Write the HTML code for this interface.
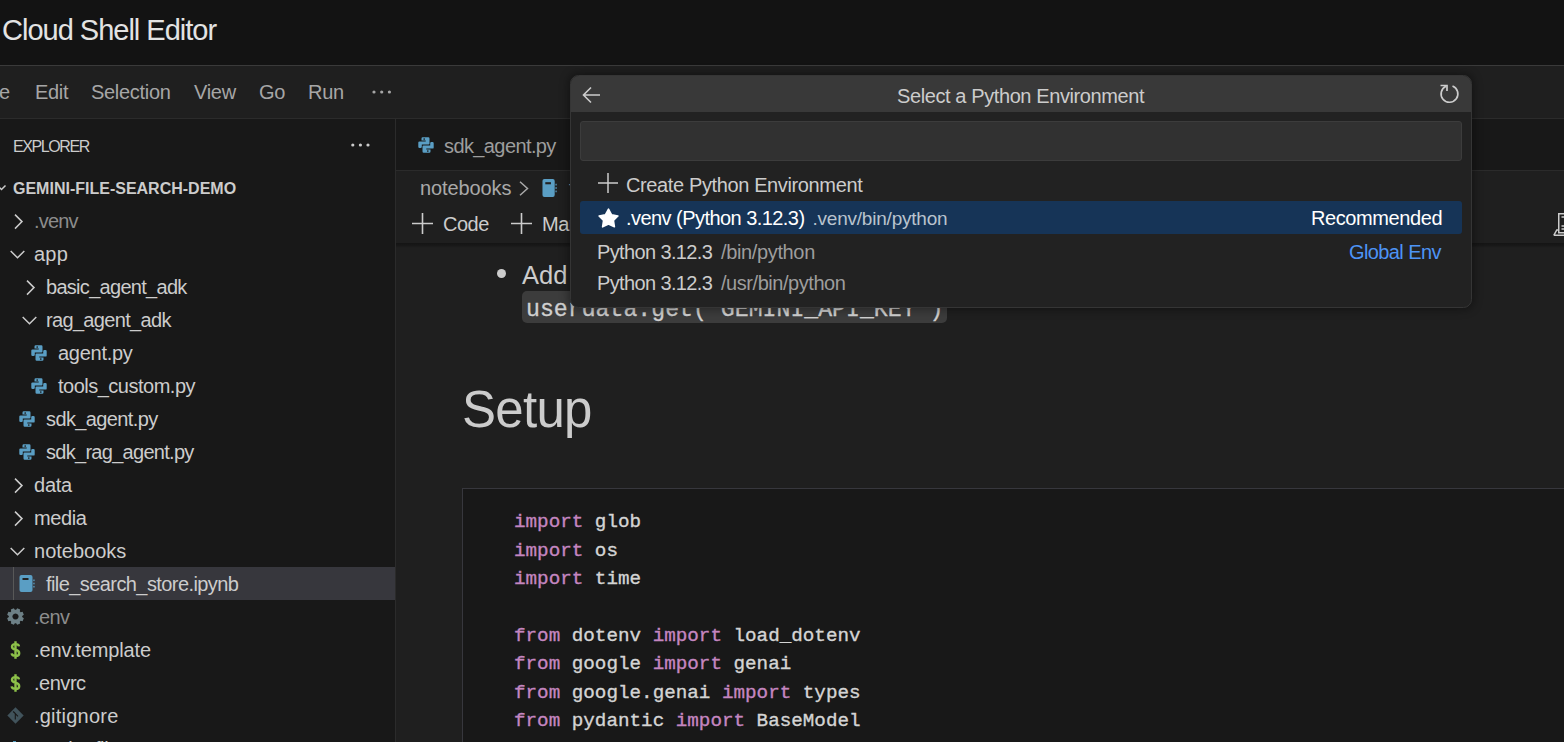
<!DOCTYPE html>
<html><head><meta charset="utf-8">
<style>
*{margin:0;padding:0;box-sizing:border-box}
html,body{width:1564px;height:742px;overflow:hidden;background:#1f1f1f;font-family:"Liberation Sans",sans-serif;color:#cccccc}
.a{position:absolute;white-space:nowrap;line-height:1}
svg.a{overflow:visible}
.ui{font-size:20px;letter-spacing:-0.5px}
.mi{font-size:20px;letter-spacing:-0.3px;color:#a6a6a6;top:82px}
.tr{font-size:20px;letter-spacing:-0.6px;color:#cccccc}
.dim{color:#8c8c8c}
.code{font-family:"Liberation Mono",monospace;font-size:19.25px;color:#d4d4d4;letter-spacing:0;-webkit-text-stroke:0.35px currentColor}
.kw{color:#c586c0}
.desc{color:#9d9d9d}
</style></head><body>
<!-- title bar -->
<div class="a" style="left:0;top:0;width:1564px;height:65px;background:#131313"></div>
<div class="a" style="left:2px;top:16px;font-size:29px;letter-spacing:-1px;color:#e3e3e3">Cloud Shell Editor</div>
<div class="a" style="left:0;top:65px;width:1564px;height:1px;background:#3a3a3a"></div>
<!-- menu bar -->
<div class="a" style="left:0;top:66px;width:1564px;height:52px;background:#1f1f1f"></div>
<div class="a" style="left:0;top:118px;width:1564px;height:1px;background:#2b2b2b"></div>
<div class="a mi" style="left:-1px">e</div>
<div class="a mi" style="left:35px">Edit</div>
<div class="a mi" style="left:91px">Selection</div>
<div class="a mi" style="left:194px">View</div>
<div class="a mi" style="left:259px">Go</div>
<div class="a mi" style="left:308px">Run</div>
<svg class="a" style="left:372px;top:89px" width="20" height="6"><circle cx="2" cy="3" r="1.6" fill="#a6a6a6"/><circle cx="9.7" cy="3" r="1.6" fill="#a6a6a6"/><circle cx="17.4" cy="3" r="1.6" fill="#a6a6a6"/></svg>

<!-- sidebar -->
<div class="a" style="left:0;top:119px;width:395px;height:623px;background:#181818"></div>
<div class="a" style="left:395px;top:119px;width:1px;height:623px;background:#2b2b2b"></div>
<div class="a" style="left:13px;top:139.2px;font-size:16px;letter-spacing:-1.4px;color:#cccccc">EXPLORER</div>
<svg class="a" style="left:351px;top:142px" width="20" height="6"><circle cx="1.8" cy="3" r="1.6" fill="#cccccc"/><circle cx="9.4" cy="3" r="1.6" fill="#cccccc"/><circle cx="17" cy="3" r="1.6" fill="#cccccc"/></svg>
<svg class="a" style="left:-3px;top:183px" width="10" height="10"><path d="M0.5 2.5 L4.5 6.5 L8.5 2.5" stroke="#cccccc" stroke-width="1.5" fill="none"/></svg>
<div class="a" style="left:13px;top:181px;font-size:16px;font-weight:bold;color:#cccccc">GEMINI-FILE-SEARCH-DEMO</div>

<!-- selected row -->
<div class="a" style="left:0;top:567px;width:395px;height:33px;background:#37373d"></div>
<div class="a" style="left:13px;top:567px;width:1px;height:33px;background:#585858"></div>

<!-- tree rows: rowtop = 204 + 33k ; text top = rowtop+7.4 -->
<!-- chevrons -->
<svg class="a" style="left:14px;top:213.6px" width="10" height="15"><path d="M1 0.6 L8 7.6 L1 14.6" stroke="#cccccc" stroke-width="1.5" fill="none"/></svg>
<div class="a tr dim" style="left:34px;top:211.4px;letter-spacing:-0.8px">.venv</div>
<svg class="a" style="left:10px;top:250px" width="15" height="10"><path d="M0.7 1 L7.5 7.8 L14.3 1" stroke="#cccccc" stroke-width="1.5" fill="none"/></svg>
<div class="a tr" style="left:34px;top:244.4px;letter-spacing:0.25px">app</div>
<svg class="a" style="left:26px;top:279.6px" width="10" height="15"><path d="M1 0.6 L8 7.6 L1 14.6" stroke="#cccccc" stroke-width="1.5" fill="none"/></svg>
<div class="a tr" style="left:46px;top:277.4px;letter-spacing:-0.71px">basic_agent_adk</div>
<svg class="a" style="left:22px;top:316px" width="15" height="10"><path d="M0.7 1 L7.5 7.8 L14.3 1" stroke="#cccccc" stroke-width="1.5" fill="none"/></svg>
<div class="a tr" style="left:46px;top:310.4px;letter-spacing:-0.67px">rag_agent_adk</div>

<svg class="a" style="left:31px;top:344.5px" width="16" height="16" viewBox="0 0 16 16"><use href="#py"/></svg>
<div class="a tr" style="left:58px;top:343.4px;letter-spacing:-0.27px">agent.py</div>
<svg class="a" style="left:31px;top:377.5px" width="16" height="16" viewBox="0 0 16 16"><use href="#py"/></svg>
<div class="a tr" style="left:58px;top:376.4px;letter-spacing:-0.5px">tools_custom.py</div>
<svg class="a" style="left:19px;top:410.5px" width="16" height="16" viewBox="0 0 16 16"><use href="#py"/></svg>
<div class="a tr" style="left:46px;top:409.4px;letter-spacing:-0.61px">sdk_agent.py</div>
<svg class="a" style="left:19px;top:443.5px" width="16" height="16" viewBox="0 0 16 16"><use href="#py"/></svg>
<div class="a tr" style="left:46px;top:442.4px;letter-spacing:-0.71px">sdk_rag_agent.py</div>

<svg class="a" style="left:14px;top:477.6px" width="10" height="15"><path d="M1 0.6 L8 7.6 L1 14.6" stroke="#cccccc" stroke-width="1.5" fill="none"/></svg>
<div class="a tr" style="left:34px;top:475.4px;letter-spacing:-0.23px">data</div>
<svg class="a" style="left:14px;top:510.6px" width="10" height="15"><path d="M1 0.6 L8 7.6 L1 14.6" stroke="#cccccc" stroke-width="1.5" fill="none"/></svg>
<div class="a tr" style="left:34px;top:508.4px;letter-spacing:-0.38px">media</div>
<svg class="a" style="left:10px;top:547px" width="15" height="10"><path d="M0.7 1 L7.5 7.8 L14.3 1" stroke="#cccccc" stroke-width="1.5" fill="none"/></svg>
<div class="a tr" style="left:34px;top:541.4px;letter-spacing:0.01px">notebooks</div>

<svg class="a" style="left:19px;top:575px" width="17" height="17" viewBox="0 0 17 17"><use href="#nb"/></svg>
<div class="a tr" style="left:46px;top:574.4px;letter-spacing:-0.58px">file_search_store.ipynb</div>

<svg class="a" style="left:7px;top:608px" width="17" height="17" viewBox="0 0 17 17"><path fill="#6d8086" fill-rule="evenodd" d="M16.83 10.21 L15.60 13.18 L13.66 12.78 L12.78 13.66 L13.18 15.60 L10.21 16.83 L9.12 15.17 L7.88 15.17 L6.79 16.83 L3.82 15.60 L4.22 13.66 L3.34 12.78 L1.40 13.18 L0.17 10.21 L1.83 9.12 L1.83 7.88 L0.17 6.79 L1.40 3.82 L3.34 4.22 L4.22 3.34 L3.82 1.40 L6.79 0.17 L7.88 1.83 L9.12 1.83 L10.21 0.17 L13.18 1.40 L12.78 3.34 L13.66 4.22 L15.60 3.82 L16.83 6.79 L15.17 7.88 L15.17 9.12z M8.5 5.4 a3.1 3.1 0 1 0 0.001 0z"/></svg>
<div class="a tr dim" style="left:34px;top:607.4px;letter-spacing:-0.6px">.env</div>
<svg class="a" style="left:10px;top:641px" width="11" height="18" viewBox="0 0 11 18"><use href="#dollar"/></svg>
<div class="a tr" style="left:34px;top:640.4px;letter-spacing:-0.12px">.env.template</div>
<svg class="a" style="left:10px;top:674px" width="11" height="18" viewBox="0 0 11 18"><use href="#dollar"/></svg>
<div class="a tr" style="left:34px;top:673.4px;letter-spacing:-0.48px">.envrc</div>
<svg class="a" style="left:7px;top:707px" width="17" height="17" viewBox="0 0 17 17"><path fill="#41535b" d="M8.5 0.3 L16.7 8.5 L8.5 16.7 L0.3 8.5z"/><path d="M6.2 4.5 L8.3 6.6 V12.5 M8.3 6.6 L11 9.3" stroke="#181818" stroke-width="1.1" fill="none"/></svg>
<div class="a tr" style="left:34px;top:706.4px;letter-spacing:0.22px">.gitignore</div>
<svg class="a" style="left:13px;top:740.5px" width="4" height="6"><rect x="0" y="0" width="3" height="6" fill="#519aba"/></svg>
<div class="a tr" style="left:34px;top:738.6px;letter-spacing:-0.4px">Dockerfile</div>

<!-- tabs -->
<div class="a" style="left:396px;top:119px;width:1168px;height:51px;background:#181818"></div>
<div class="a" style="left:396px;top:170px;width:1168px;height:1px;background:#2b2b2b"></div>
<svg class="a" style="left:417.5px;top:136.5px" width="16" height="16" viewBox="0 0 16 16"><use href="#py"/></svg>
<div class="a ui" style="left:444px;top:135.6px;color:#9d9d9d;letter-spacing:-0.6px">sdk_agent.py</div>

<!-- breadcrumbs -->
<div class="a ui" style="left:420px;top:178px;color:#a9a9a9;letter-spacing:-0.1px">notebooks</div>
<svg class="a" style="left:519px;top:180.5px" width="10" height="15"><path d="M1 0.7 L8.5 7.5 L1 14.3" stroke="#a9a9a9" stroke-width="1.5" fill="none"/></svg>
<svg class="a" style="left:541.8px;top:178.6px" width="16" height="18" viewBox="0 0 17 17" preserveAspectRatio="none"><use href="#nb"/></svg>

<div class="a ui" style="left:569px;top:178px;color:#a9a9a9">file_search_store.ipynb</div>
<!-- notebook toolbar -->
<div class="a" style="left:396px;top:243px;width:1168px;height:5px;background:linear-gradient(rgba(0,0,0,.36),rgba(0,0,0,.22) 50%,rgba(0,0,0,0))"></div>
<svg class="a" style="left:412px;top:213px" width="21" height="21"><path d="M10.5 0 V21 M0 10.5 H21" stroke="#cccccc" stroke-width="1.6"/></svg>
<div class="a ui" style="left:443px;top:213.9px;color:#cccccc">Code</div>
<svg class="a" style="left:511px;top:213px" width="21" height="21"><path d="M10.5 0 V21 M0 10.5 H21" stroke="#cccccc" stroke-width="1.6"/></svg>
<div class="a ui" style="left:542px;top:213.9px;color:#cccccc">Markdown</div>
<svg class="a" style="left:1552px;top:212px" width="30" height="25"><rect x="6.75" y="1.75" width="16" height="19" stroke="#cccccc" stroke-width="1.5" fill="none"/><path d="M9.5 5 H22 M9.5 14 H22 M9.5 17 H22" stroke="#cccccc" stroke-width="1.4"/><path d="M1.8 23.3 L4.8 17.9 H6.75 M1.8 23.3 H28" stroke="#cccccc" stroke-width="1.5" fill="none"/></svg>

<!-- markdown content -->
<div class="a" style="left:497px;top:268.5px;width:9px;height:9px;border-radius:50%;background:#cccccc"></div>
<div class="a" style="left:522px;top:263.2px;font-size:25.5px;color:#cccccc">Add your API key</div>
<div class="a" style="left:522px;top:291px;width:425px;height:32px;border-radius:5px;background:#3c3c3c"></div>
<div class="a" style="left:526px;top:299.2px;font-family:'Liberation Mono',monospace;font-size:23.2px;color:#d0d0d0;-webkit-text-stroke:0.3px #d0d0d0">userdata.get('GEMINI_API_KEY')</div>

<div class="a" style="left:462px;top:383.6px;font-size:51px;letter-spacing:-0.7px;color:#cccccc">Setup</div>

<!-- code cell -->
<div class="a" style="left:462px;top:488px;width:1110px;height:300px;background:#181818;border:1px solid #37373d"></div>
<div class="a code" style="left:514px;top:513.25px"><span class="kw">import</span> glob</div>
<div class="a code" style="left:514px;top:541.65px"><span class="kw">import</span> os</div>
<div class="a code" style="left:514px;top:570.05px"><span class="kw">import</span> time</div>
<div class="a code" style="left:514px;top:626.85px"><span class="kw">from</span> dotenv <span class="kw">import</span> load_dotenv</div>
<div class="a code" style="left:514px;top:655.25px"><span class="kw">from</span> google <span class="kw">import</span> genai</div>
<div class="a code" style="left:514px;top:683.65px"><span class="kw">from</span> google.genai <span class="kw">import</span> types</div>
<div class="a code" style="left:514px;top:712.05px"><span class="kw">from</span> pydantic <span class="kw">import</span> BaseModel</div>

<!-- quick pick -->
<div class="a" style="left:570px;top:75px;width:902px;height:233px;background:#222222;border:1px solid #353535;border-radius:8.5px;box-shadow:0 0 8px 2px rgba(0,0,0,.36);overflow:hidden">
  <div class="a" style="left:0;top:0;width:902px;height:36px;background:#393939"></div>
</div>
<svg class="a" style="left:581.5px;top:85.7px" width="19" height="18"><path d="M1.5 9 H18 M9 1.5 L1.5 9 L9 16.5" stroke="#cccccc" stroke-width="1.6" fill="none"/></svg>
<div class="a ui" style="left:897px;top:85.9px;color:#cccccc;letter-spacing:-0.4px">Select a Python Environment</div>
<svg class="a" style="left:1439px;top:84px" width="21" height="21" viewBox="0 0 21 21"><path d="M7 2.2 A8.4 8.4 0 1 0 13.5 2.0" stroke="#cccccc" stroke-width="1.7" fill="none"/><path d="M1.5 1.5 H8 V7" stroke="#cccccc" stroke-width="1.7" fill="none"/></svg>
<div class="a" style="left:580px;top:121px;width:882px;height:40px;background:#313131;border:1px solid #3c3c3c;border-radius:3px"></div>
<svg class="a" style="left:597.5px;top:173px" width="20" height="20"><path d="M10 0 V20 M0 10 H20" stroke="#cccccc" stroke-width="1.5"/></svg>
<div class="a ui" style="left:626px;top:175px;color:#cccccc;letter-spacing:-0.375px">Create Python Environment</div>
<div class="a" style="left:580px;top:201px;width:882px;height:33px;background:#163457;border-radius:3px"></div>
<svg class="a" style="left:598px;top:208px" width="22" height="20" viewBox="0 0 22 20"><path fill="#ffffff" d="M10.5 1.2 L13.6 6.9 L19.9 8.0 L15.4 12.5 L16.4 18.8 L10.5 16.0 L4.6 18.8 L5.6 12.5 L1.1 8.0 L7.4 6.9z" stroke="#ffffff" stroke-width="1.6" stroke-linejoin="round"/></svg>
<div class="a ui" style="left:626px;top:207.6px;color:#ffffff;letter-spacing:-0.55px">.venv (Python 3.12.3)</div>
<div class="a ui" style="left:812.5px;top:208.5px;font-size:19px;color:#b9c3ce;letter-spacing:-0.22px">.venv/bin/python</div>
<div class="a ui" style="left:1311px;top:207.6px;color:#ffffff;letter-spacing:-0.4px">Recommended</div>
<div class="a ui" style="left:597px;top:242.1px;color:#cccccc;letter-spacing:-0.63px">Python 3.12.3</div>
<div class="a ui desc" style="left:721px;top:242.1px;letter-spacing:-0.36px">/bin/python</div>
<div class="a ui" style="left:1349px;top:242.1px;color:#4d94f5;letter-spacing:-0.6px">Global Env</div>
<div class="a ui" style="left:597px;top:273px;color:#cccccc;letter-spacing:-0.63px">Python 3.12.3</div>
<div class="a ui desc" style="left:721px;top:273px;letter-spacing:-0.45px">/usr/bin/python</div>

<svg width="0" height="0" style="position:absolute">
  <defs>
    <g id="py">
      <path fill="#5a9ec4" d="M4.7,0.3 H10.3 Q11.5,0.3 11.5,1.5 V6.6 Q11.5,7.6 10.5,7.6 H3.8 V9.8 Q3.8,11 2.6,11 H1.5 Q0.3,11 0.3,9.8 V5.6 Q0.3,4.4 1.5,4.4 H7.7 V3.6 H3.5 V1.5 Q3.5,0.3 4.7,0.3 Z"/>
      <path fill="#5a9ec4" d="M11.3,15.7 H5.7 Q4.5,15.7 4.5,14.5 V9.4 Q4.5,8.4 5.5,8.4 H12.2 V6.2 Q12.2,5 13.4,5 H14.5 Q15.7,5 15.7,6.2 V10.4 Q15.7,11.6 14.5,11.6 H8.3 V12.4 H12.5 V14.5 Q12.5,15.7 11.3,15.7 Z"/>
      <circle cx="6.2" cy="2.0" r="0.85" fill="#1a1a1a"/><circle cx="9.8" cy="14.0" r="0.85" fill="#1a1a1a"/>
    </g>
    <g id="nb">
      <rect x="0.5" y="0" width="13" height="17" rx="2" fill="#5a9ec4"/>
      <rect x="3.5" y="3" width="6" height="2" fill="#222"/>
      <rect x="14.3" y="4.5" width="1.3" height="1.6" fill="#5a9ec4"/><rect x="14.3" y="7.7" width="1.3" height="1.6" fill="#5a9ec4"/><rect x="14.3" y="10.9" width="1.3" height="1.6" fill="#5a9ec4"/>
    </g>
    <g id="dollar">
      <path d="M9 5.4 Q8.6 3.1 5.5 3.1 Q2.0 3.1 2.0 5.7 Q2.0 7.8 5.5 8.6 Q9.2 9.5 9.2 12.2 Q9.2 14.9 5.5 14.9 Q2.0 14.9 1.6 12.4 M5.5 0.3 V17.7" stroke="#8dc149" stroke-width="2.4" fill="none"/>
    </g>
  </defs>
</svg>
</body></html>
